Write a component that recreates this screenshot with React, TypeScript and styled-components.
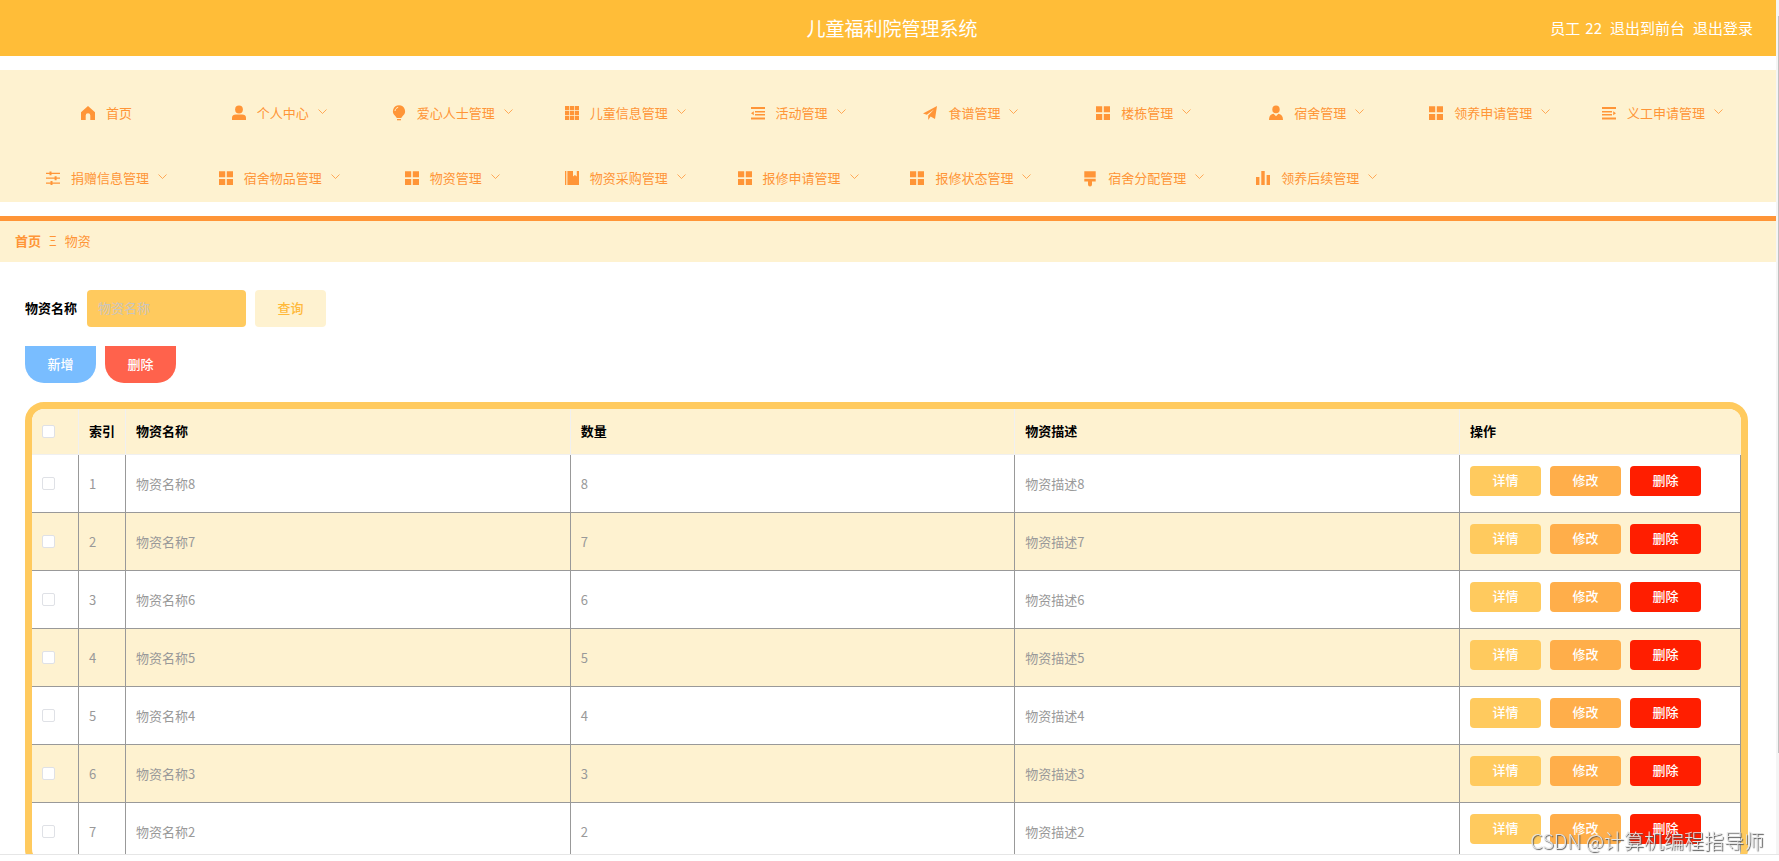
import React from 'react';
import styled, { createGlobalStyle, css } from 'styled-components';

const Global = createGlobalStyle`
  * { box-sizing: border-box; }
  html, body, #root { height: 100%; }
  body {
    margin: 0;
    background: #fff;
    color: #000;
    font-family: "Noto Sans CJK SC", "Liberation Sans", sans-serif;
    font-size: 13px;
    line-height: 20px;
  }
  button, input { font: inherit; }
  a { color: inherit; text-decoration: none; }
`;

const Window = styled.div`
  display: flex;
  flex-direction: column;
  height: 100vh;
  padding-bottom: 6px;
`;

const Viewport = styled.div`
  display: flex;
  flex: 1;
  min-height: 0;
  border-bottom: 1px solid #e6e6e6;
`;

const Page = styled.div`
  flex: 1;
  min-width: 0;
  overflow: hidden;
`;

const ScrollTrack = styled.div`
  width: 3px;
  padding: 16px 0 0 2px;
  background: #f5f5f5;
`;

const ScrollThumb = styled.div`
  height: 88%;
  background: #c1c1c1;
`;

const Header = styled.header`
  display: grid;
  grid-template-columns: 1fr auto 1fr;
  align-items: center;
  height: 56px;
  padding: 0 23px;
  background: #ffbd38;
  color: #fff;
`;

const Title = styled.h1`
  grid-column: 2;
  margin: 0;
  padding-left: 8px;
  font-size: 19px;
  line-height: 28px;
  font-weight: 400;
`;

const UserLinks = styled.div`
  display: flex;
  justify-content: flex-end;
  gap: 8px;
  font-size: 15px;
`;

const UserName = styled.span`
  display: flex;
  gap: 5px;
`;

const Menu = styled.nav`
  margin-top: 14px;
  padding: 19px 27px 0 20px;
  background: #fef2d0;
`;

const MenuList = styled.ul`
  display: grid;
  grid-template-columns: repeat(10, 1fr);
  row-gap: 17px;
  margin: 0;
  padding: 0;
  list-style: none;
`;

const MenuLink = styled.a`
  display: flex;
  align-items: center;
  justify-content: center;
  height: 48px;
  color: #ff9537;
  white-space: nowrap;
`;

const MenuText = styled.span`
  margin-left: 11px;
`;

const Arrow = styled.svg`
  width: 9px;
  height: 9px;
  margin: 0 0 4px 9px;
`;

const Breadcrumb = styled.nav`
  display: flex;
  align-items: center;
  gap: 8px;
  height: 46px;
  margin-top: 14px;
  padding: 0 0 2px 15px;
  border-top: 5px solid #ff9537;
  background: #fef2d0;
  color: #ff9537;
`;

const Home = styled.a`
  font-weight: 700;
`;

const Content = styled.main`
  padding: 28px 28px 0 25px;
`;

const Row = styled.div`
  display: flex;
  align-items: center;
  gap: 9px;
  margin-bottom: 19px;
`;

const Label = styled.label`
  padding: 0 1px 2px 0;
  font-weight: 600;
`;

const TextInput = styled.input`
  width: 159px;
  height: 37px;
  padding: 0 11px 2px;
  border: 0;
  border-radius: 4px;
  outline: 0;
  background: #ffca5e;
  &::placeholder { color: #c9c5c0; opacity: 1; }
`;

type Kind = 'search' | 'add' | 'remove' | 'detail' | 'edit' | 'drop';

const kinds = {
  search: css`height: 37px; background: #fef2d0; color: #ffb93a;`,
  add: css`height: 37px; border-radius: 0 0 19px 19px; background: #79bdff;`,
  remove: css`height: 37px; border-radius: 0 0 19px 19px; background: #ff624c;`,
  detail: css`background: #ffca5e;`,
  edit: css`background: #ffae4a;`,
  drop: css`background: #ff1e00;`,
};

const Button = styled.button<{ $kind: Kind }>`
  width: 71px;
  height: 30px;
  padding: 0 0 2px;
  border: 0;
  border-radius: 4px;
  color: #fff;
  font-weight: 500;
  cursor: pointer;
  ${({ $kind }) => kinds[$kind]}
`;

const TableFrame = styled.div`
  overflow: hidden;
  border: 7px solid #ffca5e;
  border-radius: 19px;
`;

const Table = styled.table`
  width: 100%;
  table-layout: fixed;
  border-collapse: separate;
  border-spacing: 0;
`;

const Col = styled.col<{ $width?: number }>`
  width: ${({ $width }) => ($width ? `${$width}px` : 'auto')};
`;

const HeadCell = styled.th`
  height: 46px;
  padding: 0 9px 1px 10px;
  border-right: 1px solid #f0f0f0;
  border-bottom: 1px solid #f0f0f0;
  background: #fef2d0;
  text-align: left;
  font-weight: 700;
  &:last-child { border-right: 0; }
`;

const BodyRow = styled.tr`
  color: #999;
  &:nth-child(even) { background: #fef2d0; }
`;

const Cell = styled.td`
  height: 58px;
  padding: 0 9px 0 10px;
  border-right: 1px solid #999;
  border-bottom: 1px solid #999;
`;

const Actions = styled.div`
  display: flex;
  gap: 9px;
  padding-bottom: 5px;
`;

const Checkbox = styled.input`
  display: block;
  appearance: none;
  width: 13px;
  height: 13px;
  margin: 0;
  border: 1px solid #dfe1e6;
  border-radius: 2px;
  background: #fff;
`;

const Watermark = styled.div`
  position: fixed;
  right: 15px;
  bottom: 6px;
  color: #e4e4e4;
  font-size: 20px;
  line-height: 28px;
  font-weight: 300;
  text-shadow: 1px 1px 1px #555;
`;

const Glyph = styled.svg`
  width: 14px;
  height: 14px;
  fill: currentColor;
  overflow: visible;
`;

const shapes: Record<string, React.ReactNode> = {
  home: <path d="M7 0 14 6.2V14H9.3V9.5a2.3 2.3 0 0 0-4.6 0V14H0V6.2Z" />,
  user: (
    <>
      <ellipse cx="7" cy="3.4" rx="3.9" ry="4" />
      <path d="M0 14v-2.2C0 9.5 1.600 8.600 4 8.600h6c2.400 0 4 .9 4 3.200V14Z" />
    </>
  ),
  bulb: (
    <>
      <path d="M7-.8a6.100 6.100 0 0 1 3.700 10.900L9.200 12H4.800L3.300 10.100A6.100 6.100 0 0 1 7-.8Z" />
      <path d="M5 13h4v1.300H5Z" />
      <path d="M3 5c.2-2 1.400-3.200 3.200-3.600" fill="none" stroke="#fef2d0" strokeWidth="1" />
    </>
  ),
  grid: <path d="M0 0h4.200v4.200H0Zm4.900 0h4.200v4.200H4.900Zm4.900 0H14v4.200H9.800ZM0 4.900h4.200v4.200H0Zm4.900 0h4.200v4.200H4.900Zm4.900 0H14v4.200H9.800ZM0 9.800h4.200V14H0Zm4.900 0h4.200V14H4.900Zm4.900 0H14V14H9.800Z" />,
  fold: <path d="M0 1h14v2H0Zm4 3.900h10v1.500H4Zm0 3.200h10v1.500H4ZM0 11.500h14v2H0ZM2.800 5.200v4L0 7.200Z" />,
  unfold: <path d="M0 1h14v2H0Zm0 3.900h10v1.500H0Zm0 3.200h10v1.500H0ZM0 11.500h14v2H0ZM11.200 5.200v4L14 7.200Z" />,
  plane: <path d="M14 0 12 13 7.6 10.600 5.200 14V9.600L11 3.600 3.800 8.700 0 7.400Z" />,
  tiles: <path d="M0 .3h6.200v6H0Zm7.800 0H14v6H7.800ZM0 8h6.200v6H0Zm7.800 0H14v6H7.800Z" />,
  person: (
    <>
      <ellipse cx="7" cy="3.400" rx="3.700" ry="3.800" />
      <path d="M0 14c0-3.600 1.400-5.600 4.600-6.200L7 10.300l2.400-2.500C12.600 8.400 14 10.400 14 14Z" />
    </>
  ),
  sliders: <path d="M0 1.700h3.500V.4h2v1.300H14v1.200H5.500v1.400h-2V2.900H0Zm0 4.900h8.600V5.200h2v1.400H14v1.200h-3.400v1.400h-2V7.800H0Zm0 4.900h4.500v-1.400h2v1.400H14v1.200H6.500v1.400h-2v-1.400H0Z" />,
  book: <path d="M0 0h1.300v14H0Zm2.400 0H8v5.400l1.900-1.500 1.900 1.500V0H14v14H2.400Z" />,
  brush: <path d="M1.300.2h11.400v6.400H1.300Zm0 7.500h11.400v2.900H9v3a2 2 0 0 1-4 0v-3H1.300Z" />,
  bars: <path d="M0 6h3.400v8H0Zm5.300-6h3.400v14H5.300Zm5.300 4H14v10h-3.400Z" />,
};

const menu: [string, string][] = [
  ['home', '首页'], ['user', '个人中心'], ['bulb', '爱心人士管理'], ['grid', '儿童信息管理'],
  ['fold', '活动管理'], ['plane', '食谱管理'], ['tiles', '楼栋管理'], ['person', '宿舍管理'],
  ['tiles', '领养申请管理'], ['unfold', '义工申请管理'], ['sliders', '捐赠信息管理'],
  ['tiles', '宿舍物品管理'], ['tiles', '物资管理'], ['book', '物资采购管理'],
  ['tiles', '报修申请管理'], ['tiles', '报修状态管理'], ['brush', '宿舍分配管理'], ['bars', '领养后续管理'],
];

const supplies = [8, 7, 6, 5, 4, 3, 2];

export default function App() {
  return (
    <Window>
      <Global />
      <Viewport>
        <Page>
          <Header>
            <Title>儿童福利院管理系统</Title>
            <UserLinks>
              <UserName><span>员工</span><span>22</span></UserName>
              <a href="#front">退出到前台</a>
              <a href="#logout">退出登录</a>
            </UserLinks>
          </Header>
          <Menu>
            <MenuList>
              {menu.map(([icon, text]) => (
                <li key={text}>
                  <MenuLink href="#menu">
                    <Glyph viewBox="0 0 14 14" aria-hidden="true">{shapes[icon]}</Glyph>
                    <MenuText>{text}</MenuText>
                    {icon !== 'home' && (
                      <Arrow viewBox="0 0 9 9" aria-hidden="true">
                        <path d="M.5 2.500l4 4 4-4" fill="none" stroke="currentColor" strokeWidth=".8" />
                      </Arrow>
                    )}
                  </MenuLink>
                </li>
              ))}
            </MenuList>
          </Menu>
          <Breadcrumb>
            <Home href="#home">首页</Home>
            <span>Ξ</span>
            <span>物资</span>
          </Breadcrumb>
          <Content>
            <Row>
              <Label htmlFor="supply-name">物资名称</Label>
              <TextInput id="supply-name" type="text" placeholder="物资名称" />
              <Button type="button" $kind="search">查询</Button>
            </Row>
            <Row>
              <Button type="button" $kind="add">新增</Button>
              <Button type="button" $kind="remove">删除</Button>
            </Row>
            <TableFrame>
              <Table>
                <colgroup>
                  <Col $width={47} />
                  <Col $width={47} />
                  <Col />
                  <Col />
                  <Col />
                  <Col $width={281} />
                </colgroup>
                <thead>
                  <tr>
                    <HeadCell><Checkbox type="checkbox" aria-label="全选" /></HeadCell>
                    <HeadCell>索引</HeadCell>
                    <HeadCell>物资名称</HeadCell>
                    <HeadCell>数量</HeadCell>
                    <HeadCell>物资描述</HeadCell>
                    <HeadCell>操作</HeadCell>
                  </tr>
                </thead>
                <tbody>
                  {supplies.map((n, i) => (
                    <BodyRow key={n}>
                      <Cell><Checkbox type="checkbox" aria-label={`选择物资名称${n}`} /></Cell>
                      <Cell>{i + 1}</Cell>
                      <Cell>物资名称{n}</Cell>
                      <Cell>{n}</Cell>
                      <Cell>物资描述{n}</Cell>
                      <Cell>
                        <Actions>
                          <Button type="button" $kind="detail">详情</Button>
                          <Button type="button" $kind="edit">修改</Button>
                          <Button type="button" $kind="drop">删除</Button>
                        </Actions>
                      </Cell>
                    </BodyRow>
                  ))}
                </tbody>
              </Table>
            </TableFrame>
          </Content>
        </Page>
        <ScrollTrack><ScrollThumb /></ScrollTrack>
      </Viewport>
      <Watermark>CSDN @计算机编程指导师</Watermark>
    </Window>
  );
}
